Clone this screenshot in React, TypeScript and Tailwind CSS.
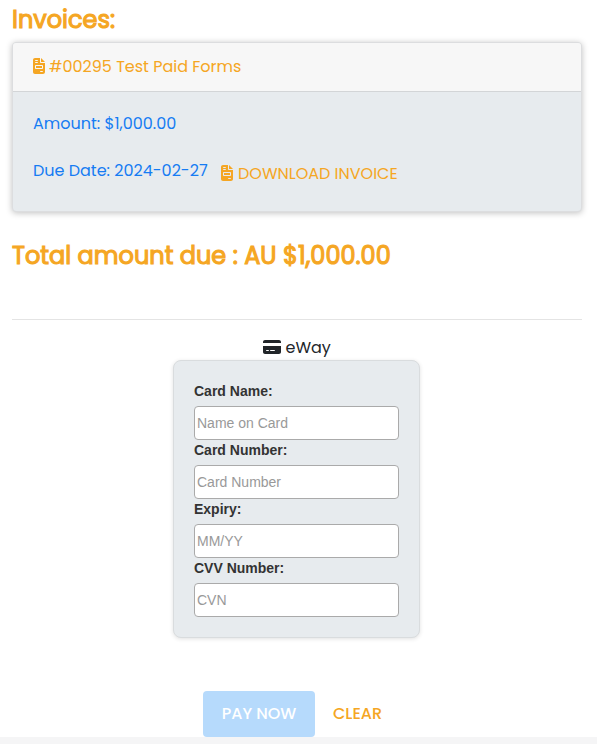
import { FaFileInvoice, FaCreditCard } from "react-icons/fa6"

const fields = [
  { label: "Card Name:", placeholder: "Name on Card" },
  { label: "Card Number:", placeholder: "Card Number" },
  { label: "Expiry:", placeholder: "MM/YY" },
  { label: "CVV Number:", placeholder: "CVN" },
]

export default function App() {
  return (
    <div className="flex h-[744px] w-full flex-col overflow-hidden bg-[#f5f5f6] font-[Poppins,Inter,sans-serif] text-base leading-6 text-[#212529]">
      <main className="h-[737px] bg-white pl-3 pr-[15px] pt-1">
        <h1 className="h-[38px] whitespace-nowrap text-2xl font-normal leading-8 text-[#f5a623] [-webkit-text-stroke:1.1px_#f5a623]">Invoices:</h1>

        {/* Invoice card */}
        <section className="h-[170px] overflow-hidden rounded border border-[#dcdddf] bg-[#e7ebee] shadow-[0_1px_6px_rgba(0,0,0,0.25)]">
          <header className="flex h-[49px] items-center border-b border-[#d3d5d7] bg-[#f7f7f7] px-5 text-[#f5a623]">
            <FaFileInvoice className="mb-0.5 mr-1 h-4 w-3" />
            <span>#00295 Test Paid Forms</span>
          </header>
          <div className="px-5 pt-5 text-[#167cf3]">
            <p>Amount: $1,000.00</p>
            <div className="mt-[23px] flex">
              <p className="w-[188px] whitespace-nowrap">Due Date: 2024-02-27</p>
              <a href="#" className="mt-[3px] flex items-center whitespace-nowrap text-[#f5a623]">
                <FaFileInvoice className="mb-0.5 mr-[5px] h-4 w-3" />
                <span>DOWNLOAD INVOICE</span>
              </a>
            </div>
          </div>
        </section>

        <h2 className="mt-[28px] whitespace-nowrap text-2xl font-normal leading-8 text-[#f5a623] [-webkit-text-stroke:1.1px_#f5a623]">
          Total amount due : AU $1,000.00
        </h2>
        <hr className="mt-[47px] border-[#e4e4e4]" />

        {/* Card payment */}
        <div className="mt-[16px] flex h-6 items-center pl-[251px]">
          <FaCreditCard className="mb-0.5 mr-[4.5px] h-4 w-[18px]" />
          <span>eWay</span>
        </div>
        <form className="ml-[161px] h-[278px] w-[247px] rounded-lg border border-[#d9dcde] bg-[#e7ebee] px-5 pt-5 font-['Liberation_Sans',sans-serif] text-sm shadow-[0_1px_4px_rgba(0,0,0,0.12)]">
          {fields.map((field) => (
            <label key={field.label} className="block h-[59px]">
              <span className="block h-[25px] font-bold leading-[21px] text-[#333]">{field.label}</span>
              <input
                className="block h-[34px] w-[205px] rounded border border-[#aaa] bg-white px-[2px] text-[#333] placeholder:text-[#999]"
                placeholder={field.placeholder}
              />
            </label>
          ))}
        </form>

        <div className="mt-[53px] flex pl-[191px]">
          <button className="h-[46px] w-[112px] rounded bg-[#b6dafc] font-medium text-white">PAY NOW</button>
          <button className="ml-[18px] h-[46px] font-medium text-[#f5a623]">CLEAR</button>
        </div>
      </main>
    </div>
  )
}
